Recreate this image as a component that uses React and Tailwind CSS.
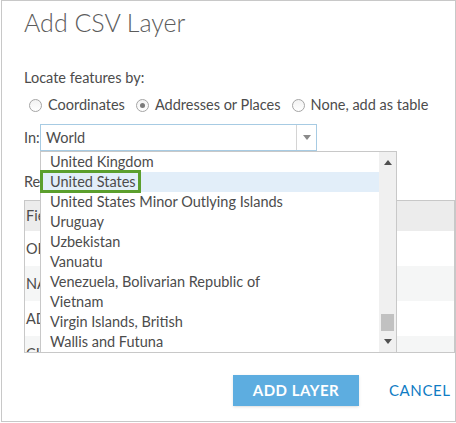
import React from 'react';

const countries = [
  'United Kingdom',
  'United States',
  'United States Minor Outlying Islands',
  'Uruguay',
  'Uzbekistan',
  'Vanuatu',
  'Venezuela, Bolivarian Republic of',
  'Vietnam',
  'Virgin Islands, British',
  'Wallis and Futuna',
];

const fields = [
  { name: 'OBJECTID', type: 'Integer' },
  { name: 'NAME', type: 'String' },
  { name: 'ADDRESS', type: 'String' },
  { name: 'CITY', type: 'City' },
];

const Radio = ({ checked, label }) => (
  <label className="flex items-center gap-[6px]">
    <span className="w-[13px] h-[13px] rounded-full border border-[#a5a5a5] bg-gradient-to-b from-[#f2f2f2] to-white flex items-center justify-center">
      {checked && <span className="w-[5px] h-[5px] rounded-full bg-[#7a7a7a]"></span>}
    </span>
    <span>{label}</span>
  </label>
);

const App = () => {
  return (
    <div className="w-[456px] h-[423px] bg-white overflow-hidden font-['Lato',sans-serif] text-[#4c4c4c]">
      <div className="relative ml-[1px] w-[455px] h-[422px] border border-[#c8c8c8] pl-[22px] overflow-hidden">
        {/* Title */}
        <h2 className="pt-[6px] text-[25px] leading-[30px] font-light text-[#5c5c5c]">Add CSV Layer</h2>

        <p className="mt-[31px] text-[14.5px] leading-[20px]">Locate features by:</p>

        {/* Radios */}
        <div className="mt-[7px] ml-[5px] flex items-center gap-[11px] text-[14.5px] leading-[20px]">
          <Radio label="Coordinates" />
          <Radio checked label="Addresses or Places" />
          <Radio label="None, add as table" />
        </div>

        {/* In: select */}
        <div className="mt-[9px] flex items-center text-[14.5px]">
          <span className="w-[16px]">In:</span>
          <div className="w-[277px] h-[27px] border border-[#a7cbe3] flex items-center">
            <span className="flex-1 pl-[5px]">World</span>
            <span className="w-[20px] h-full border-l border-[#d4d4d4] flex items-center justify-center">
              <svg width="8" height="5" viewBox="0 0 8 5"><path d="M0 0h8L4 5z" fill="#8a8a8a" /></svg>
            </span>
          </div>
        </div>

        <p className="mt-[21px] text-[14.5px] leading-[20px]">Review fields</p>

        {/* Fields table (behind dropdown) */}
        <div className="mt-[8px] w-[431px] h-[153px] border border-[#c8c8c8] overflow-hidden text-[14.5px]">
          <div className="h-[30px] bg-[#ececec] flex items-center">
            <span className="w-[213px] pl-[1px]">Field Name</span>
            <span>Field Type</span>
          </div>
          {fields.map((f, i) => (
            <div key={f.name} className={`h-[35px] flex items-center ${i % 2 ? 'bg-[#f5f6f6]' : 'bg-white'}`}>
              <span className="w-[213px] pl-[1px]">{f.name}</span>
              <span>{f.type}</span>
            </div>
          ))}
        </div>

        {/* Buttons */}
        <div className="mt-[22px] flex items-center">
          <button className="ml-[209px] w-[126px] h-[31px] bg-[#5dade0] text-white text-[15px] font-bold tracking-[0.5px] shadow-sm">
            ADD LAYER
          </button>
          <button className="ml-[30px] text-[#0f7cc4] text-[15px] tracking-[0.6px]">CANCEL</button>
        </div>

        {/* Dropdown list */}
        <div className="absolute left-[38px] top-[150px] w-[357px] h-[202px] bg-white border border-[#c8c8c8] flex text-[14.5px]">
          <ul className="flex-1">
            {countries.map((c) => (
              <li
                key={c}
                className={`h-[20px] leading-[20px] pl-[9px] ${c === 'United States' ? 'bg-[#e2eef9]' : ''}`}
              >
                {c}
              </li>
            ))}
          </ul>
          <div className="w-[17px] bg-[#f0f0f0] flex flex-col items-center">
            <svg className="mt-[8px]" width="8" height="5" viewBox="0 0 8 5"><path d="M0 5h8L4 0z" fill="#505050" /></svg>
            <div className="flex-1"></div>
            <div className="w-[13px] h-[17px] bg-[#c1c1c1]"></div>
            <svg className="mt-[8px] mb-[8px]" width="8" height="5" viewBox="0 0 8 5"><path d="M0 0h8L4 5z" fill="#505050" /></svg>
          </div>
        </div>

        {/* Highlight box */}
        <div className="absolute left-[38px] top-[169px] w-[101px] h-[23px] border-[3px] border-[#5b9f2d]"></div>
      </div>
    </div>
  );
};

export default App;
